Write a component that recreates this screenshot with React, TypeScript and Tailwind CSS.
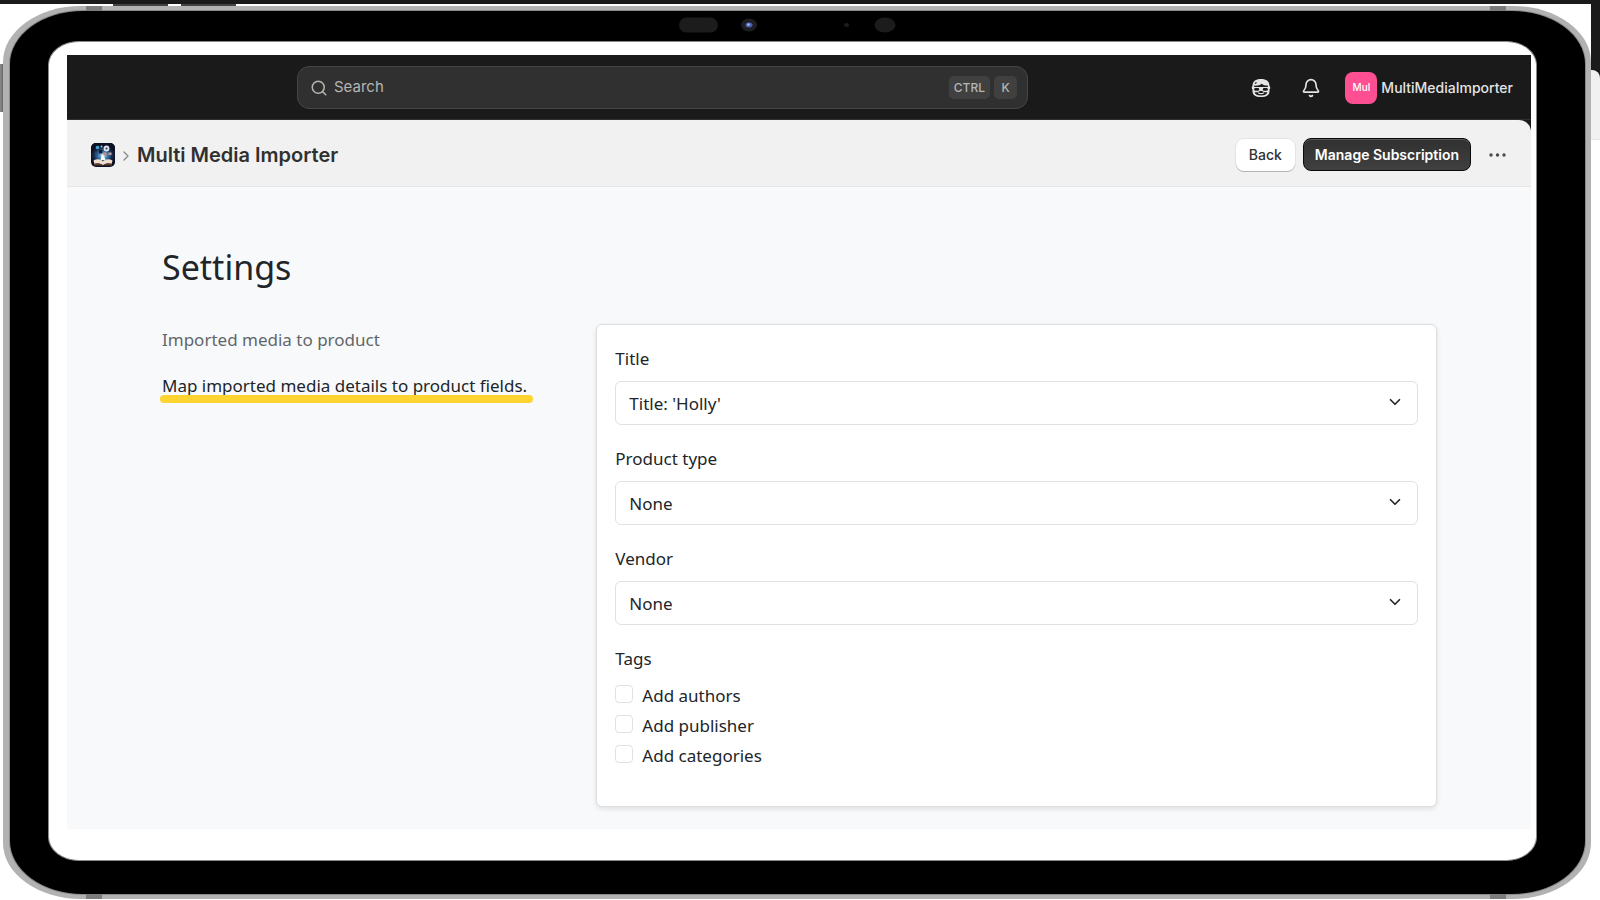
import { useId } from "react";
import { Bell, ChevronDown, ChevronRight, Search } from "lucide-react";

function SidekickIcon() {
  return (
    <svg viewBox="0 0 20 20" className="size-5" fill="none" aria-hidden="true">
      <path
        d="M1.500 8C1.500 3.500 4.500 1 10 1s8.500 2.500 8.500 7c1 .8 1 2.800 0 3.600v1.400c0 4-3 6-8.500 6s-8.500-2-8.500-6v-1.400c-1-.8-1-2.800 0-3.600Z"
        fill="#e3e3e3"
      />
      <path d="M3.200 7.600c3.400.2 6-.4 7.500-1.800 1.300 1.300 3.300 1.800 6.100 1.800v1.300H3.200Z" fill="#1a1a1a" />
      <path d="M4 5.600 5.500 4.600" stroke="#1a1a1a" strokeWidth="1.200" />
      <rect x="3.200" y="10.100" width="5" height="2.700" rx="1.300" fill="#1a1a1a" />
      <rect x="11.800" y="10.100" width="5" height="2.700" rx="1.300" fill="#1a1a1a" />
      <path d="M3.600 14.200c2.200.4 4-.1 5.400-1.200h2c1.400 1.100 3.200 1.600 5.400 1.200-.7 2.200-2.700 3.200-6.400 3.200s-5.700-1-6.400-3.200Z" fill="#1a1a1a" />
      <path d="M7.500 15c1.500.7 3.500.7 5 0" stroke="#e3e3e3" strokeWidth="1.300" strokeLinecap="round" />
    </svg>
  );
}

function AppLogo() {
  return (
    <svg viewBox="0 0 24 24" className="size-6 rounded-[5px]" aria-hidden="true">
      <defs>
        <radialGradient id="glow" cx="0.5" cy="0.62" r="0.5">
          <stop offset="0" stopColor="#e9f6ff" />
          <stop offset="0.3" stopColor="#4a90c8" />
          <stop offset="0.7" stopColor="#1b3457" />
          <stop offset="1" stopColor="#0c1224" />
        </radialGradient>
      </defs>
      <rect width="24" height="24" fill="#0c1224" />
      <rect width="24" height="20" fill="url(#glow)" />
      <circle cx="6.500" cy="4.500" r="1.800" fill="#3fa6cf" />
      <circle cx="15.500" cy="5.500" r="2.900" fill="#dfe3ee" />
      <circle cx="15.500" cy="5.500" r="1" fill="#2a3550" />
      <circle cx="10.500" cy="3.500" r="1" fill="#8ed4ee" />
      <rect x="17.500" y="9.500" width="3" height="2.500" fill="#b9a2a0" />
      <rect x="8" y="7" width="3.400" height="3.400" fill="#101a30" />
      <rect x="12.500" y="9.500" width="3" height="3" fill="#d08a72" />
      <rect x="4" y="9.500" width="2.500" height="2.500" fill="#274c78" />
      <path d="M9.500 17 11 11l2.500 3 1 3Z" fill="#f4fbff" />
      <path d="M2.500 17.500C6 15.500 10 16 12 18.500c2-2.500 6-3 9.500-1l-1 3.500c-3.500-.8-6.500-.4-8.500 1.200-2-1.600-5-2-8.500-1.200Z" fill="#f0dfcd" />
      <path d="M3 21c3.500-.8 7-.4 9 1.200 2-1.600 5.500-2 9-1.200v1.500H3Z" fill="#5c3a2a" />
    </svg>
  );
}

function SelectField({ label, options }: { label: string; options: string[] }) {
  const id = useId();
  return (
    <div className="mb-5">
      <label htmlFor={id} className="mb-2 block leading-7">
        {label}
      </label>
      <div className="relative">
        <select
          id={id}
          className="block h-11 w-full appearance-none rounded-md border border-[#dee2e6] bg-white pt-0.5 pr-10 pl-[13px] outline-none focus:border-blue-300"
        >
          {options.map((option) => (
            <option key={option}>{option}</option>
          ))}
        </select>
        <ChevronDown className="pointer-events-none absolute top-3 right-[14px] size-[18px] text-[#212529]" strokeWidth={2.200} />
      </div>
    </div>
  );
}

function CheckField({ label }: { label: string }) {
  const id = useId();
  return (
    <div className="flex h-[30px] gap-[9px]">
      <input
        id={id}
        type="checkbox"
        className="mt-[3px] size-[18px] shrink-0 appearance-none rounded-[4px] border border-[#dee2e6] bg-white checked:border-blue-500 checked:bg-blue-500"
      />
      <label htmlFor={id} className="leading-7">
        {label}
      </label>
    </div>
  );
}

function TopBar() {
  return (
    <header className="flex h-[65px] items-center border-b border-[#303030] bg-[#1a1a1a] pt-px pr-[18px] font-['Inter',sans-serif]">
      <div className="ml-[230px] flex h-[43px] w-[calc(50%+8px)] flex-none items-center gap-1.5 rounded-xl border border-[#454545] bg-[#303030] pr-2.5 pl-3 text-[#b5b5b5]">
        <Search className="size-[18px] shrink-0" strokeWidth={2} />
        <input
          type="text"
          aria-label="Search"
          placeholder="Search"
          className="min-w-0 flex-1 bg-transparent text-[15px] outline-none placeholder:text-[#b5b5b5]"
        />
        <kbd className="flex h-[23px] items-center rounded-[5px] bg-[#404040] px-[5px] font-['Inter',sans-serif] text-xs font-medium">CTRL</kbd>
        <kbd className="-ml-0.5 flex h-[23px] w-[23px] items-center justify-center rounded-[5px] bg-[#404040] font-['Inter',sans-serif] text-xs font-medium">K</kbd>
      </div>
      <div className="ml-auto flex items-center text-[#e3e3e3]">
        <button type="button" aria-label="Assistant" className="mr-[30px]">
          <SidekickIcon />
        </button>
        <button type="button" aria-label="Notifications" className="mr-6">
          <Bell className="size-5" strokeWidth={2} />
        </button>
        <button type="button" className="flex items-center gap-1">
          <span className="flex size-8 items-center justify-center rounded-lg bg-[#ff4f93] text-[10px] font-medium text-white">Mul</span>
          <span className="text-sm font-medium">MultiMediaImporter</span>
        </button>
      </div>
    </header>
  );
}

function TitleBar() {
  return (
    <div className="bg-[#1a1a1a]">
      <div className="flex h-[67px] items-center rounded-tr-xl border-b border-[#e6e6e6] bg-[#f1f1f1] pt-[3px] pr-[25px] pl-6 font-['Inter',sans-serif] text-[#303030]">
        <AppLogo />
        <ChevronRight className="mx-[3px] mt-0.5 size-4 text-[#8a8a8a]" strokeWidth={2} />
        <h1 className="text-xl font-semibold">Multi Media Importer</h1>
        <div className="ml-auto flex items-center">
          <button type="button" className="mr-2 h-8 rounded-lg bg-white px-[13px] text-sm font-medium shadow-[0_1px_0_#b5b5b5,0_0_0_1px_#e3e3e3]">
            Back
          </button>
          <button
            type="button"
            className="h-[33px] rounded-lg border border-[#0a0a0a] bg-linear-to-b from-[#303030] to-[#404040] px-[11px] text-sm font-semibold text-white shadow-[inset_0_1px_0_#5a5a5a]"
          >
            Manage Subscription
          </button>
          <button type="button" aria-label="More actions" className="ml-[18px]">
            <svg viewBox="0 0 17 4" className="h-1 w-[17px]" fill="#4a4a4a" aria-hidden="true">
              <circle cx="2" cy="2" r="1.700" />
              <circle cx="8.500" cy="2" r="1.700" />
              <circle cx="15" cy="2" r="1.700" />
            </svg>
          </button>
        </div>
      </div>
    </div>
  );
}

function Settings() {
  return (
    <main className="bg-[#f8f9fb] pt-[53px] pr-[94px] pb-[22px] pl-[95px] font-['Noto_Sans',sans-serif] text-[17px] text-[#212529]">
      <h2 className="text-[34px] leading-[54px]">Settings</h2>
      <div className="mt-[30px] grid grid-cols-[1fr_2fr] gap-3.5">
        <div className="whitespace-nowrap">
          <p className="mt-0.5 leading-7 text-[#62666a]">Imported media to product</p>
          <p className="relative mt-[18px] leading-7">
            Map imported media details to product fields.
            <span className="absolute top-[23px] -left-0.5 h-2 w-[373px] rounded-full bg-[#ffd330]" />
          </p>
        </div>
        <form className="rounded-md border border-[#dcdddf] bg-white px-[18px] pt-5 pb-[34px] shadow-[0_2px_5px_rgba(0,0,0,0.1)]">
          <SelectField label="Title" options={["Title: 'Holly'", "None"]} />
          <SelectField label="Product type" options={["None", "Book"]} />
          <SelectField label="Vendor" options={["None", "Publisher"]} />
          <fieldset>
            <legend className="mb-[9px] leading-7">Tags</legend>
            <CheckField label="Add authors" />
            <CheckField label="Add publisher" />
            <CheckField label="Add categories" />
          </fieldset>
        </form>
      </div>
    </main>
  );
}

function CameraRow() {
  return (
    <div className="flex h-[30px] items-center justify-center pr-2.5 pb-0.5" aria-hidden="true">
      <svg viewBox="0 0 218 16" className="h-4 w-[218px]">
        <rect x="0" y="0.500" width="39" height="15" rx="7.500" fill="#1c1c1c" />
        <ellipse cx="70" cy="8" rx="8" ry="6.500" fill="#1e1e22" />
        <ellipse cx="70" cy="8" rx="3.500" ry="2.500" fill="#4a5fae" />
        <circle cx="69.500" cy="7.500" r="1.200" fill="#a9c2f2" />
        <ellipse cx="167.500" cy="8" rx="2.500" ry="2" fill="#1e1e1e" />
        <ellipse cx="206" cy="8" rx="10.500" ry="7.500" fill="#1c1c1c" />
      </svg>
    </div>
  );
}

export default function App() {
  return (
    <div className="min-h-screen overflow-hidden bg-white">
      <div className="h-1 bg-[#1a1a1a]" />
      <div className="flex">
        <div className="relative min-w-0 flex-1 pt-0.5 pl-[3px]">
          <span className="absolute top-[60px] left-0 h-12 w-[4px] bg-linear-to-r from-[#8c8c8c] to-[#5e5e5e]" />
          <span className="absolute top-0 left-[113px] h-0.5 w-[55px] bg-[#444444]" />
          <span className="absolute top-0 left-[181px] h-0.5 w-[55px] bg-[#444444]" />
          <div className="relative rounded-[78px/56px] bg-[#b2b2b2] pt-[5px] pr-1.5 pb-[5px] pl-[7px]">
            <span className="absolute top-0 left-[83px] h-[5px] w-4 bg-[#7c7c7c]" />
            <span className="absolute top-0 right-[85px] h-[5px] w-4 bg-[#7c7c7c]" />
            <span className="absolute bottom-0 left-[83px] h-[5px] w-4 bg-[#7c7c7c]" />
            <span className="absolute right-[85px] bottom-0 h-[5px] w-4 bg-[#7c7c7c]" />
            <div className="rounded-[73px/53px] bg-black pr-12 pb-[33px] pl-[38px] shadow-[0_0_0_1px_#8a8a8a]">
              <CameraRow />
              <div className="rounded-[31px/24px] border border-[#8a8a8a] bg-white pt-[13px] pr-[5px] pb-[31px] pl-[18px]">
                <TopBar />
                <TitleBar />
                <Settings />
              </div>
            </div>
          </div>
        </div>
        <div className="w-[9px] flex-none bg-white">
          <div className="bg-[#1a1a1a] pt-[66px]">
            <div className="h-[70px] rounded-tr-lg border-b border-[#e6e6e6] bg-[#f1f1f1]" />
          </div>
        </div>
      </div>
    </div>
  );
}
